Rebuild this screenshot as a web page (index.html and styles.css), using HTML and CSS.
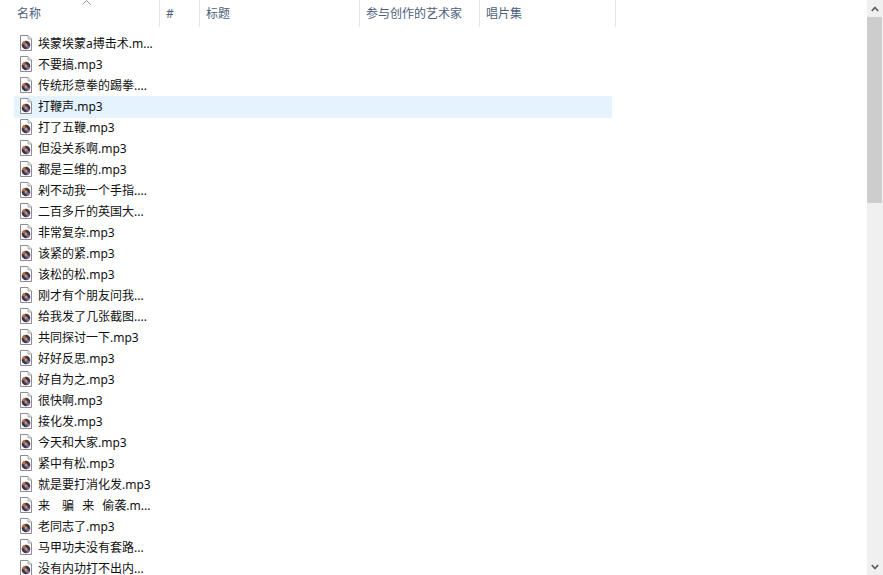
FILE: index.html
```html
<!DOCTYPE html>
<html lang="zh-CN">
<head>
    <meta charset="UTF-8">
    <title>音频文件</title>
    <link rel="stylesheet" href="styles.css">
</head>
<body>
    <svg class="defs" width="0" height="0">
        <symbol id="mp3" viewBox="0 0 12 16">
            <path d="M.5.5h7.500l3.500 3.500v11.500h-11z" fill="#fff" stroke="#8c8c8c"/>
            <path d="M8 .5v3.500h3.500" fill="#e4e4e4" stroke="#adadad"/>
            <circle cx="6" cy="10" r="4.300" fill="#3d3640"/>
            <path d="M1.900 9a4.300 4.300 0 0 1 3.400-3.200l.4 2.600a1.800 1.800 0 0 0-1.300 1.100z" fill="#c9683a"/>
            <path d="M10.100 11a4.300 4.300 0 0 1-3.400 3.200l-.4-2.600a1.800 1.800 0 0 0 1.300-1.100z" fill="#8a5fa8"/>
            <circle cx="6" cy="10" r="1.500" fill="#bdb6b8"/>
            <circle cx="6" cy="10" r=".6" fill="#4a4048"/>
        </symbol>
    </svg>
    <div class="explorer">
        <div class="pane">
            <div class="header">
                <div class="col col-name">名称<span class="sort"><svg width="9" height="5" viewBox="0 0 9 5"><path d="M.5 4.500l4-4 4 4" fill="none" stroke="#8f959c"/></svg></span></div>
                <div class="col col-num">#</div>
                <div class="col col-title">标题</div>
                <div class="col col-artist">参与创作的艺术家</div>
                <div class="col col-album">唱片集</div>
            </div>
            <div class="files">
                <div class="file"><svg class="icon"><use href="#mp3"/></svg><span>埃蒙埃蒙a搏击术.m...</span></div>
                <div class="file"><svg class="icon"><use href="#mp3"/></svg><span>不要搞.mp3</span></div>
                <div class="file"><svg class="icon"><use href="#mp3"/></svg><span>传统形意拳的踢拳....</span></div>
                <div class="file selected"><svg class="icon"><use href="#mp3"/></svg><span>打鞭声.mp3</span></div>
                <div class="file"><svg class="icon"><use href="#mp3"/></svg><span>打了五鞭.mp3</span></div>
                <div class="file"><svg class="icon"><use href="#mp3"/></svg><span>但没关系啊.mp3</span></div>
                <div class="file"><svg class="icon"><use href="#mp3"/></svg><span>都是三维的.mp3</span></div>
                <div class="file"><svg class="icon"><use href="#mp3"/></svg><span>剁不动我一个手指....</span></div>
                <div class="file"><svg class="icon"><use href="#mp3"/></svg><span>二百多斤的英国大...</span></div>
                <div class="file"><svg class="icon"><use href="#mp3"/></svg><span>非常复杂.mp3</span></div>
                <div class="file"><svg class="icon"><use href="#mp3"/></svg><span>该紧的紧.mp3</span></div>
                <div class="file"><svg class="icon"><use href="#mp3"/></svg><span>该松的松.mp3</span></div>
                <div class="file"><svg class="icon"><use href="#mp3"/></svg><span>刚才有个朋友问我...</span></div>
                <div class="file"><svg class="icon"><use href="#mp3"/></svg><span>给我发了几张截图....</span></div>
                <div class="file"><svg class="icon"><use href="#mp3"/></svg><span>共同探讨一下.mp3</span></div>
                <div class="file"><svg class="icon"><use href="#mp3"/></svg><span>好好反思.mp3</span></div>
                <div class="file"><svg class="icon"><use href="#mp3"/></svg><span>好自为之.mp3</span></div>
                <div class="file"><svg class="icon"><use href="#mp3"/></svg><span>很快啊.mp3</span></div>
                <div class="file"><svg class="icon"><use href="#mp3"/></svg><span>接化发.mp3</span></div>
                <div class="file"><svg class="icon"><use href="#mp3"/></svg><span>今天和大家.mp3</span></div>
                <div class="file"><svg class="icon"><use href="#mp3"/></svg><span>紧中有松.mp3</span></div>
                <div class="file"><svg class="icon"><use href="#mp3"/></svg><span>就是要打消化发.mp3</span></div>
                <div class="file"><svg class="icon"><use href="#mp3"/></svg><span class="tight">来　骗   来   偷袭.m...</span></div>
                <div class="file"><svg class="icon"><use href="#mp3"/></svg><span>老同志了.mp3</span></div>
                <div class="file"><svg class="icon"><use href="#mp3"/></svg><span>马甲功夫没有套路...</span></div>
                <div class="file"><svg class="icon"><use href="#mp3"/></svg><span>没有内功打不出内...</span></div>
            </div>
        </div>
        <div class="scrollbar">
            <div class="arrow"><svg width="8" height="6" viewBox="0 0 8 6"><path d="M.8 5L4 1.500 7.200 5" fill="none" stroke="#606060" stroke-width="1.800"/></svg></div>
            <div class="thumb"></div>
            <div class="track"></div>
            <div class="arrow"><svg width="8" height="6" viewBox="0 0 8 6"><path d="M.8 1L4 4.500 7.200 1" fill="none" stroke="#606060" stroke-width="1.800"/></svg></div>
        </div>
    </div>
</body>
</html>
```

FILE: styles.css
```css
html, body { height: 100%; }
body {
    margin: 0;
    background-color: #fff;
    color: #111;
    font-family: "Noto Sans", "Noto Sans CJK SC", sans-serif;
    font-size: 12px;
    overflow: hidden;
}
.defs { display: block; height: 0; }
.explorer { display: flex; height: 100vh; }
.pane { flex: 1; min-width: 0; overflow: hidden; }

.header { display: flex; height: 27px; padding-left: 8px; color: #4c607a; }
.col {
    position: relative;
    box-sizing: border-box;
    padding: 1px 0 0 9px;
    line-height: 26px;
    border-right: 1px solid #e5e5e5;
}
.col-name { width: 152px; }
.col-num { width: 40px; padding-left: 6px; }
.col-title { width: 160px; padding-left: 6px; }
.col-artist { width: 120px; padding-left: 6px; }
.col-album { width: 136px; padding-left: 6px; }
.sort { position: absolute; left: 74px; top: 0; line-height: 0; }

.files { padding: 6px 0 0 14px; }
.file {
    display: flex;
    width: 598px;
    height: 21px;
    line-height: 21px;
    white-space: pre;
}
.file.selected { height: 22px; margin-bottom: -1px; background-color: #e5f3ff; }
.icon { width: 12px; height: 16px; margin: 2px 6px 0 6px; flex: none; }
.tight { word-spacing: -0.4px; }

.scrollbar {
    display: flex;
    flex-direction: column;
    flex: none;
    width: 16px;
    background-color: #f0f0f0;
}
.arrow { display: flex; align-items: center; justify-content: center; flex: none; height: 17px; }
.thumb { flex: none; height: 186px; width: 15px; background-color: #cdcdcd; }
.track { flex: 1; }
```
